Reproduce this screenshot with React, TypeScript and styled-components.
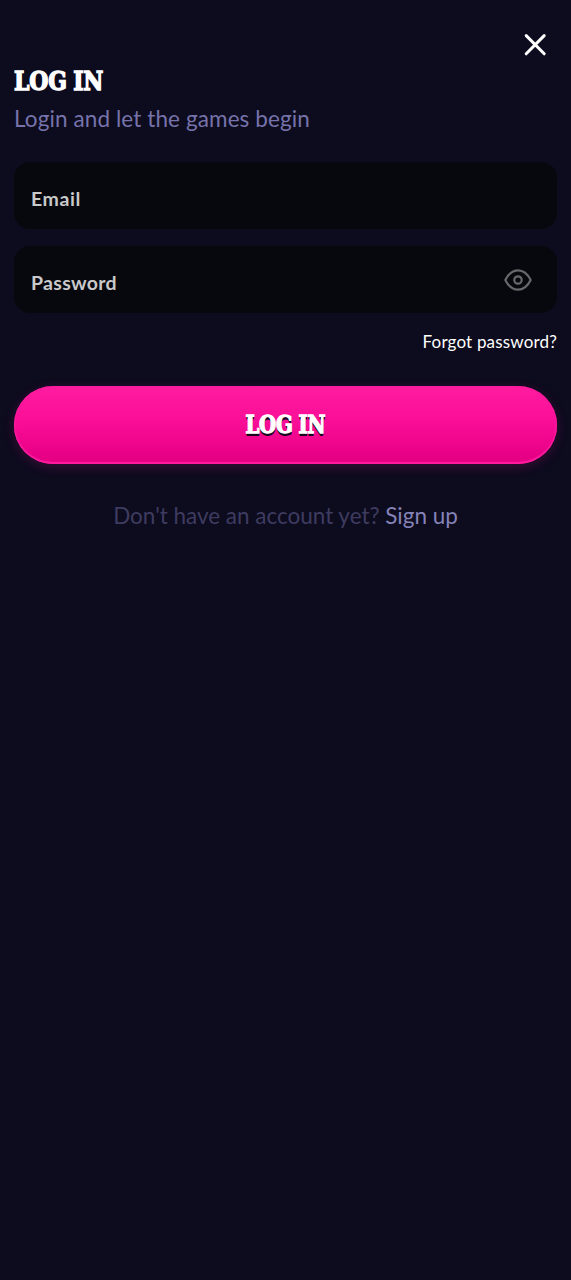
import React from 'react';
import styled, { createGlobalStyle } from 'styled-components';

const GlobalStyle = createGlobalStyle`
  * { box-sizing: border-box; }
  body { margin: 0; background: #0d0b1e; }
`;

const Page = styled.main`
  min-height: 1280px;
  padding: 29px 14px 0;
  display: flex;
  flex-direction: column;
  background: #0d0b1e;
  font-family: Lato, 'Liberation Sans', sans-serif;
`;

const CloseButton = styled.button`
  align-self: flex-end;
  width: 32px;
  height: 32px;
  margin-right: 6px;
  padding: 0;
  border: 0;
  background: none;
  color: #fff;
  svg { display: block; }
`;

const Display = styled.span<{ $size: number; $shadow?: boolean }>`
  display: inline-block;
  white-space: nowrap;
  font-family: 'DejaVu Serif Condensed', 'DejaVu Serif', serif;
  font-stretch: condensed;
  font-weight: 700;
  font-size: ${p => p.$size}px;
  line-height: 34px;
  letter-spacing: -0.2px;
  word-spacing: -1px;
  color: #fff;
  -webkit-text-stroke: 1.3px #fff;
  text-shadow: ${p => (p.$shadow ? '0 2px 0 #16091c, 0 3px 0 #16091c' : 'none')};
  transform: scaleX(${p => (p.$shadow ? 0.9 : 0.92)});
  transform-origin: ${p => (p.$shadow ? 'center' : 'left')};
`;

const Title = styled.h1`
  margin: 3px 0 0;
  height: 34px;
  display: flex;
`;

const Subtitle = styled.p`
  margin: 6px 0 0;
  font-size: 22.5px;
  line-height: 30px;
  letter-spacing: 0.1px;
  color: #7673ab;
`;

const Fields = styled.div`
  display: flex;
  flex-direction: column;
  gap: 17px;
  margin-top: 28.4px;
`;

const Field = styled.label`
  height: 67px;
  padding: 8px 25px 0 17px;
  display: flex;
  align-items: center;
  justify-content: space-between;
  border-radius: 16px;
  background: #07080d;
  svg { display: block; margin-top: -7px; }
`;

const FieldLabel = styled.span<{ $spacing: number }>`
  margin-top: -1px;
  font-size: 19.5px;
  line-height: 24px;
  font-weight: 700;
  letter-spacing: ${p => p.$spacing}px;
  color: #c9c9cb;
`;

const Forgot = styled.a`
  align-self: flex-end;
  margin-top: 17.6px;
  font-size: 17px;
  line-height: 22px;
  letter-spacing: 0.17px;
  color: #fff;
`;

const LoginButton = styled.button`
  margin-top: 33px;
  height: 78.5px;
  padding: 0 0 1px;
  border: 0;
  border-radius: 40px;
  background: linear-gradient(180deg, #ff1c9f 0%, #fb0f98 42%, #e60084 92%);
  box-shadow: inset 0 -2px 1px #ff1c9f, inset 1px 0 2px #ff1c9f, inset -1px 0 2px #ff1c9f,
    0 3px 12px rgba(255, 28, 159, 0.18);
`;

const Signup = styled.p`
  margin: 36.5px 0 0;
  text-align: center;
  font-size: 22.5px;
  line-height: 30px;
  letter-spacing: -0.02px;
  white-space: nowrap;
  color: #3e3b60;
  a { color: #8582b8; }
`;

export default function App() {
  return (
    <>
      <GlobalStyle />
      <Page>
        <CloseButton aria-label="Close">
          <svg width="32" height="32" viewBox="0 0 32 32" fill="none" stroke="currentColor" strokeWidth="3" strokeLinecap="round">
            <path d="M7.2 6.6 25.2 24.8M25.2 6.6 7.2 24.8" />
          </svg>
        </CloseButton>
        <Title><Display $size={26.5}>LOG IN</Display></Title>
        <Subtitle>Login and let the games begin</Subtitle>
        <Fields>
          <Field><FieldLabel $spacing={0.55}>Email</FieldLabel></Field>
          <Field>
            <FieldLabel $spacing={0.3}>Password</FieldLabel>
            <svg width="28" height="22" viewBox="0 0 28 22" fill="none" stroke="#68686c" strokeWidth="2.2" strokeLinejoin="round">
              <path d="M1.3 11C4.5 4.6 9 1.3 14 1.3S23.500 4.600 26.700 11C23.500 17.400 19 20.700 14 20.700S4.500 17.400 1.300 11Z" />
              <circle cx="14" cy="11" r="3.7" />
            </svg>
          </Field>
        </Fields>
        <Forgot>Forgot password?</Forgot>
        <LoginButton><Display $size={24.3} $shadow>LOG IN</Display></LoginButton>
        <Signup>Don't have an account yet? <a>Sign up</a></Signup>
      </Page>
    </>
  );
}
